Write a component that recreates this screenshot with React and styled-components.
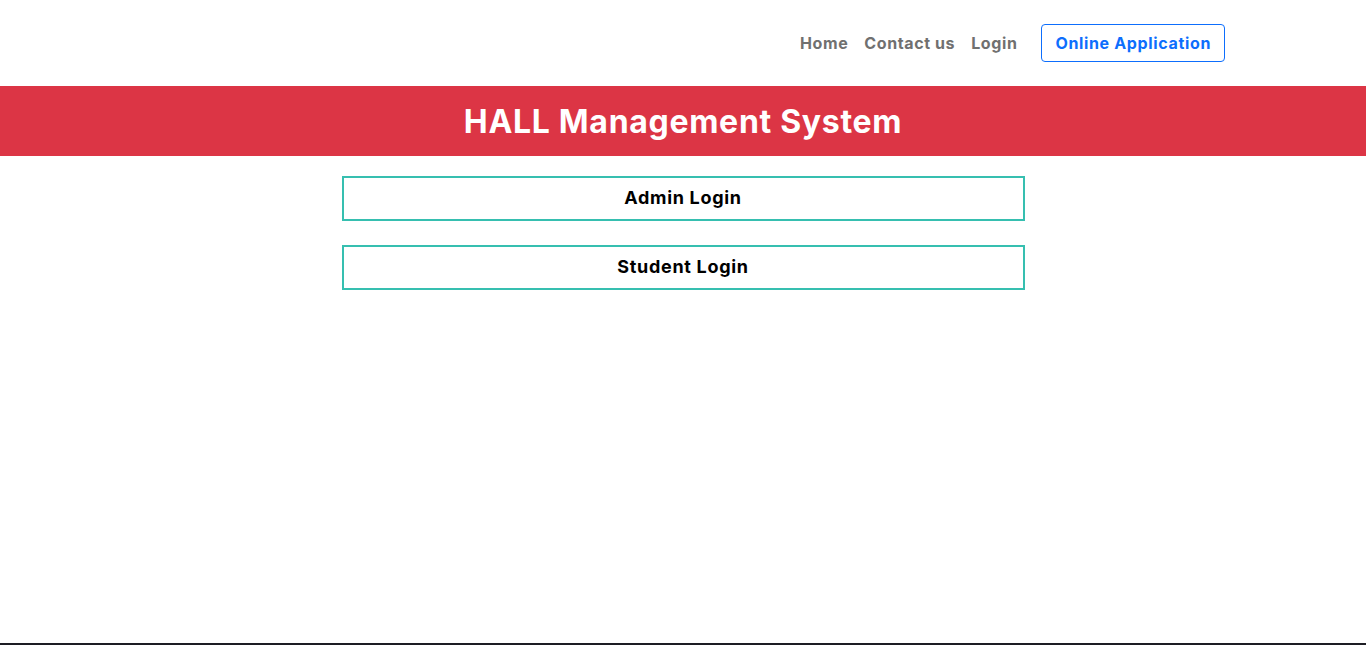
import React from 'react';
import styled, { createGlobalStyle } from 'styled-components';

const GlobalStyle = createGlobalStyle`
  html, body {
    margin: 0;
    padding: 0;
    background: #fff;
    font-family: Inter, "Noto Sans", "Liberation Sans", sans-serif;
  }
  * { box-sizing: border-box; }
`;

const Page = styled.div`
  min-height: 100vh;
  display: flex;
  flex-direction: column;
`;

const Navbar = styled.nav`
  height: 86px;
  display: flex;
  align-items: center;
  justify-content: flex-end;
  padding-right: 141px;
`;

const NavLinks = styled.ul`
  display: flex;
  align-items: center;
  gap: 16px;
  list-style: none;
  margin: 0;
  padding: 0;
`;

const NavLink = styled.a`
  color: #707070;
  font-size: 16px;
  font-weight: 700;
  text-decoration: none;
  letter-spacing: 0.6px;
`;

const OutlineButton = styled.button`
  margin-left: 8px;
  height: 38px;
  padding: 0 13px;
  border: 1px solid #0d6efd;
  border-radius: 4px;
  background: #fff;
  color: #0d6efd;
  font-family: inherit;
  font-size: 16px;
  font-weight: 700;
  letter-spacing: 0.65px;
`;

const Banner = styled.header`
  height: 70px;
  background: #dc3545;
  display: flex;
  align-items: center;
  justify-content: center;
`;

const Title = styled.h1`
  margin: 0;
  color: #fff;
  font-size: 32px;
  font-weight: 700;
  letter-spacing: 0.7px;
`;

const Main = styled.main`
  flex: 1;
  display: flex;
  flex-direction: column;
  align-items: center;
  gap: 24px;
  padding-top: 20px;
`;

const LoginButton = styled.button`
  width: 683px;
  height: 45px;
  padding: 0 0 2px;
  border: 2px solid #36bfb0;
  background: #fff;
  color: #000;
  font-family: inherit;
  font-size: 18px;
  font-weight: 700;
  letter-spacing: 0.7px;
  cursor: pointer;
`;

const Strip = styled.div`
  height: 2px;
  background: #1d1d24;
`;

export default function App() {
  return (
    <Page>
      <GlobalStyle />
      <Navbar>
        <NavLinks>
          <li><NavLink href="#">Home</NavLink></li>
          <li><NavLink href="#">Contact us</NavLink></li>
          <li><NavLink href="#">Login</NavLink></li>
          <li><OutlineButton>Online Application</OutlineButton></li>
        </NavLinks>
      </Navbar>
      <Banner>
        <Title>HALL Management System</Title>
      </Banner>
      <Main>
        <LoginButton>Admin Login</LoginButton>
        <LoginButton>Student Login</LoginButton>
      </Main>
      <Strip />
    </Page>
  );
}
